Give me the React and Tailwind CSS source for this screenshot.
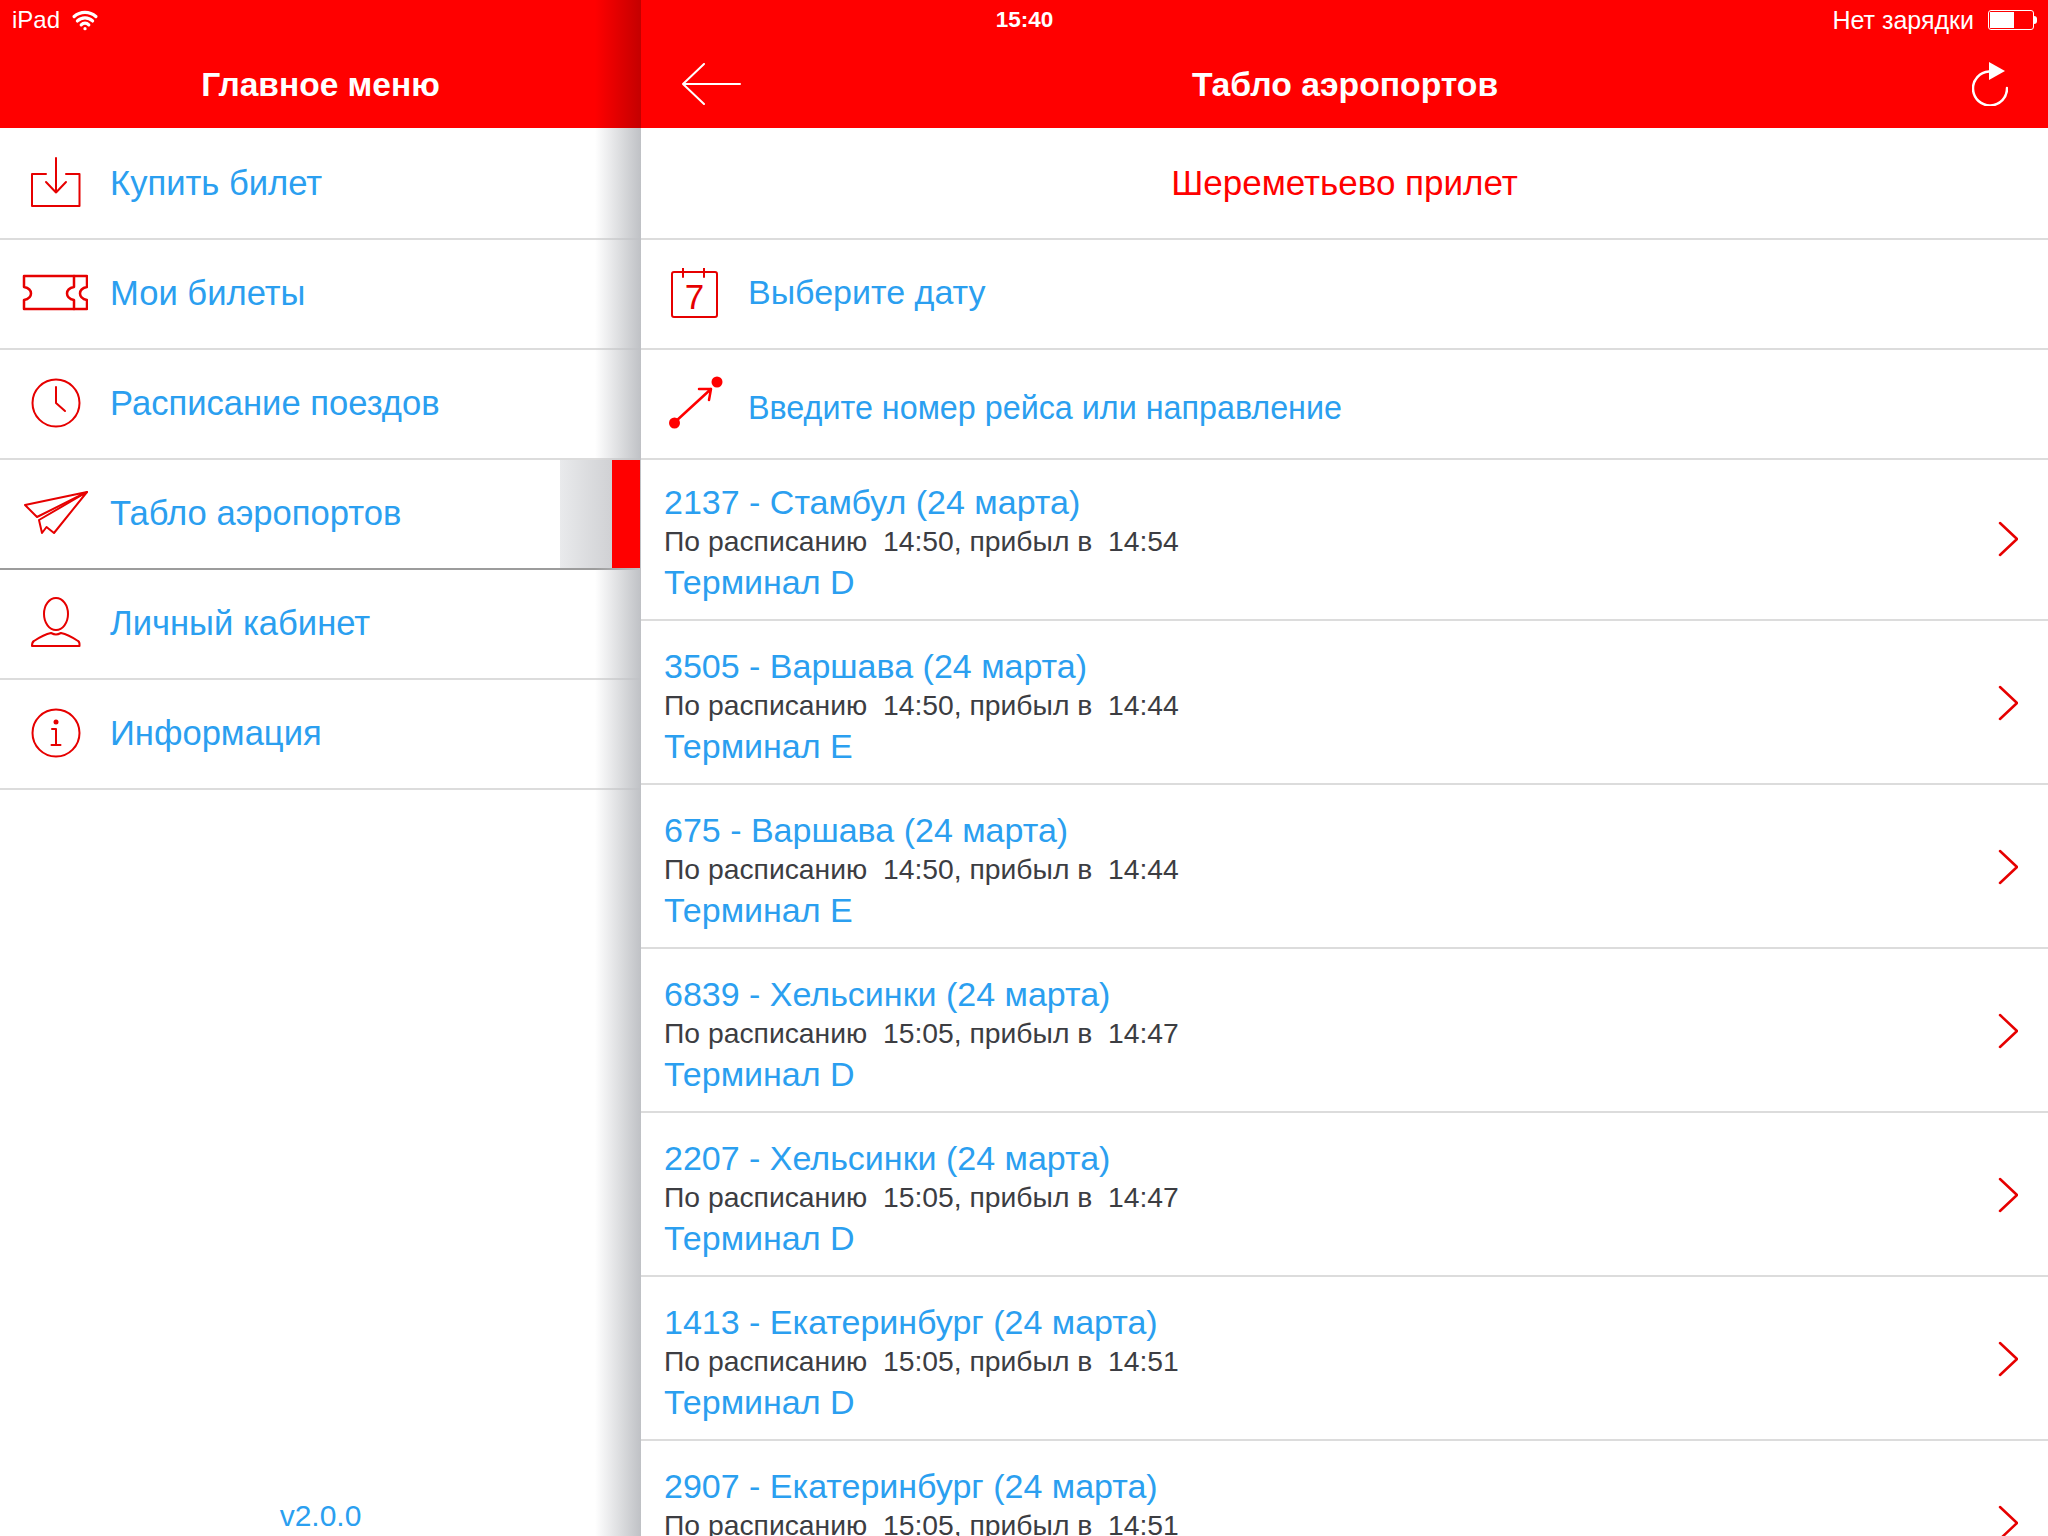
import { Wifi } from 'lucide-react';

const RED = '#ff0000';
const FONT = "font-['Liberation_Sans',Arial,sans-serif]";

const flights = [
  { title: '2137 - Стамбул (24 марта)', plan: '14:50', fact: '14:54', term: 'Терминал D' },
  { title: '3505 - Варшава (24 марта)', plan: '14:50', fact: '14:44', term: 'Терминал E' },
  { title: '675 - Варшава (24 марта)', plan: '14:50', fact: '14:44', term: 'Терминал E' },
  { title: '6839 - Хельсинки (24 марта)', plan: '15:05', fact: '14:47', term: 'Терминал D' },
  { title: '2207 - Хельсинки (24 марта)', plan: '15:05', fact: '14:47', term: 'Терминал D' },
  { title: '1413 - Екатеринбург (24 марта)', plan: '15:05', fact: '14:51', term: 'Терминал D' },
  { title: '2907 - Екатеринбург (24 марта)', plan: '15:05', fact: '14:51', term: 'Терминал D' },
];

/* ── line icons, all drawn on a 66x66 box ── */
function Icon({ children }) {
  return (
    <svg width="66" height="66" viewBox="0 0 66 66" fill="none" stroke="#e60000" strokeWidth="2" strokeLinecap="round" strokeLinejoin="round">
      {children}
    </svg>
  );
}

const BuyIcon = () => (
  <Icon>
    <path d="M24 23H10v32h47.5V23H44" />
    <path d="M34 7v34.5M24 31l10 10.5L44 31" />
  </Icon>
);

const TicketIcon = () => (
  <Icon>
    <g strokeWidth="2.5">
      <path d="M2 15h63v11c-5 1-7 3-7 6.5s2 5.5 7 6.5v9H2v-9c5-1 7-3 7-6.5S7 27 2 26z" />
      <path d="M52 15v11c-5 1-7 3-7 6.5s2 5.5 7 6.5v9" />
    </g>
  </Icon>
);

const ClockIcon = () => (
  <Icon>
    <circle cx="34" cy="32" r="23.5" />
    <path d="M34 16v16l9 8" />
  </Icon>
);

const PlaneIcon = () => (
  <Icon>
    <path d="M65 11L3 24l12 12z" />
    <path d="M65 11L17 39l3 13 4.5-6 7.5 6z" />
  </Icon>
);

const UserIcon = () => (
  <Icon>
    <ellipse cx="34" cy="23" rx="12" ry="16" />
    <path d="M10 55c0-2 0-4 2-5 6-4 12-7 17-8 2 1 3 1.5 5 1.5s3-.5 5-1.5c5 1 11 4 17 8 2 1 1.5 3 1.5 5z" />
  </Icon>
);

const InfoIcon = () => (
  <Icon>
    <circle cx="34" cy="32" r="23.5" />
    <circle cx="34" cy="21" r="2.5" fill="#e60000" stroke="none" />
    <path d="M30 28h4v16M29.5 44h9" />
  </Icon>
);

const CalendarIcon = () => (
  <svg width="48" height="52" viewBox="0 0 48 52" fill="none" stroke="#e60000" strokeWidth="2" strokeLinecap="round" strokeLinejoin="round">
    <rect x="1" y="4" width="45" height="45" rx="2" />
    <path d="M12 0v9M33 0v9" />
    <text x="23.5" y="41" textAnchor="middle" fontSize="35" fill="#e60000" stroke="none" fontFamily="Liberation Sans">7</text>
  </svg>
);

const RouteIcon = () => (
  <svg width="58" height="58" viewBox="0 0 58 58" fill="none" stroke={RED} strokeWidth="2.5" strokeLinecap="round" strokeLinejoin="round">
    <circle cx="8.5" cy="48" r="5.5" fill={RED} stroke="none" />
    <circle cx="51" cy="7" r="5.5" fill={RED} stroke="none" />
    <path d="M9 47L45 14M33 14h12l-2 11" />
  </svg>
);

const menu = [
  { label: 'Купить билет', icon: <BuyIcon /> },
  { label: 'Мои билеты', icon: <TicketIcon /> },
  { label: 'Расписание поездов', icon: <ClockIcon /> },
  { label: 'Табло аэропортов', icon: <PlaneIcon />, active: true },
  { label: 'Личный кабинет', icon: <UserIcon /> },
  { label: 'Информация', icon: <InfoIcon /> },
];

export default function App() {
  return (
    <div className={`${FONT} relative w-[2048px] h-[1536px] overflow-hidden flex bg-white`}>

      {/* ── Main menu ── */}
      <aside className="relative w-[641px] h-full shrink-0 flex flex-col">
        <header className="h-[128px] bg-[#ff0000] text-white shrink-0 flex items-center justify-center pt-[42px] text-[33.5px] font-bold">
          Главное меню
        </header>

        <div className="pt-[2px] flex flex-col shrink-0">
          {menu.map(item => (
            <div
              key={item.label}
              className={`relative h-[110px] shrink-0 flex items-center border-b-2 ${item.active ? 'border-[#9c9c9c]' : 'border-[#dcdcdc]'}`}
            >
              <div className="w-[110px] flex justify-center shrink-0">{item.icon}</div>
              <span className="text-[34.6px] text-[#2b9ff0]">{item.label}</span>
              {item.active && (
                <div className="absolute right-px inset-y-0 w-[80px] flex z-10">
                  <div className="w-[52px] bg-gradient-to-r from-[#e9eaec] to-[#d0d1d4]" />
                  <div className="w-7 bg-[#ff0000]" />
                </div>
              )}
            </div>
          ))}
        </div>

        <div className="flex-1 flex items-end justify-center pb-[5px] text-[30px] leading-none text-[#2b9ff0]">v2.0.0</div>

        {/* panel shadow, over the rows */}
        <div className="absolute top-[128px] bottom-0 right-0 w-[46px] bg-gradient-to-r from-transparent to-[#bfc1c5] pointer-events-none" />
        <div className="absolute top-0 h-[128px] right-0 w-[46px] bg-gradient-to-r from-transparent to-[#c40000] pointer-events-none" />
      </aside>

      {/* ── Airport board ── */}
      <main className="flex-1 min-w-0 h-full flex flex-col">
        <header className="h-[128px] bg-[#ff0000] text-white shrink-0 pt-10 grid grid-cols-[1fr_auto_1fr] items-center pl-[41px] pr-[40px]">
          <svg width="60" height="42" viewBox="0 0 60 42" fill="none" stroke="white" strokeWidth="2" strokeLinecap="round" strokeLinejoin="round">
            <path d="M22 1L1 21l21 20M1 21h57" />
          </svg>
          <span className="text-[33.7px] font-bold">Табло аэропортов</span>
          <svg className="justify-self-end" width="36" height="44" viewBox="0 0 36 44" fill="none">
            <path d="M17 9.5A17 17 0 1 0 35 26" stroke="white" strokeWidth="2.5" strokeLinecap="round" />
            <path d="M17 0l16 9-16 9z" fill="white" />
          </svg>
        </header>

        <div className="h-[112px] shrink-0 flex items-center justify-center border-b-2 border-[#dcdcdc] text-[35px] text-[#ff0000]">
          Шереметьево прилет
        </div>

        <div className="h-[110px] shrink-0 flex items-center border-b-2 border-[#dcdcdc]">
          <div className="w-[107px] flex justify-center shrink-0"><CalendarIcon /></div>
          <span className="text-[34px] text-[#2b9ff0] pb-[3px]">Выберите дату</span>
        </div>

        <div className="h-[110px] shrink-0 flex items-center border-b-2 border-[#dcdcdc]">
          <div className="w-[107px] flex justify-center shrink-0"><RouteIcon /></div>
          <span className="text-[32.3px] text-[#2b9ff0] pt-[8px]">Введите номер рейса или направление</span>
        </div>

        {flights.map((f, i) => (
          <div key={f.title} className={`${i === 0 ? 'h-[161px]' : 'h-[164px]'} shrink-0 flex items-end justify-between border-b-2 border-[#dcdcdc] pl-[23px] pr-[30px]`}>
            <div className="flex flex-col pb-[15px]">
              <span className="text-[34px] leading-[40px] text-[#2b9ff0]">{f.title}</span>
              <span className="text-[28.3px] leading-[38px] text-[#3c3d42] whitespace-pre">{`По расписанию  ${f.plan}, прибыл в  ${f.fact}`}</span>
              <span className="text-[34px] leading-[44px] text-[#2b9ff0]">{f.term}</span>
            </div>
            <svg className="mb-[62px]" width="20" height="36" viewBox="0 0 20 36" fill="none" stroke="#e60000" strokeWidth="2.5" strokeLinecap="round" strokeLinejoin="round">
              <path d="M2 2l17 16L2 34" />
            </svg>
          </div>
        ))}
      </main>

      {/* ── iOS status bar, over both headers ── */}
      <div className="absolute inset-x-0 top-0 h-10 grid grid-cols-3 items-center px-3 pr-[11px] text-white text-[24px] leading-none">
        <div className="flex items-center gap-3">
          <span>iPad</span>
          <Wifi size={26} strokeWidth={3} />
        </div>
        <span className="justify-self-center font-bold text-[22.5px]">15:40</span>
        <div className="justify-self-end flex items-center gap-[14px]">
          <span className="text-[25px]">Нет зарядки</span>
          <div className="flex items-center">
            <div className="w-[46px] h-[20px] border border-white rounded-[3px] p-px">
              <div className="w-[24px] h-full bg-white" />
            </div>
            <div className="w-[3px] h-[8px] bg-white rounded-r-full" />
          </div>
        </div>
      </div>
    </div>
  );
}
